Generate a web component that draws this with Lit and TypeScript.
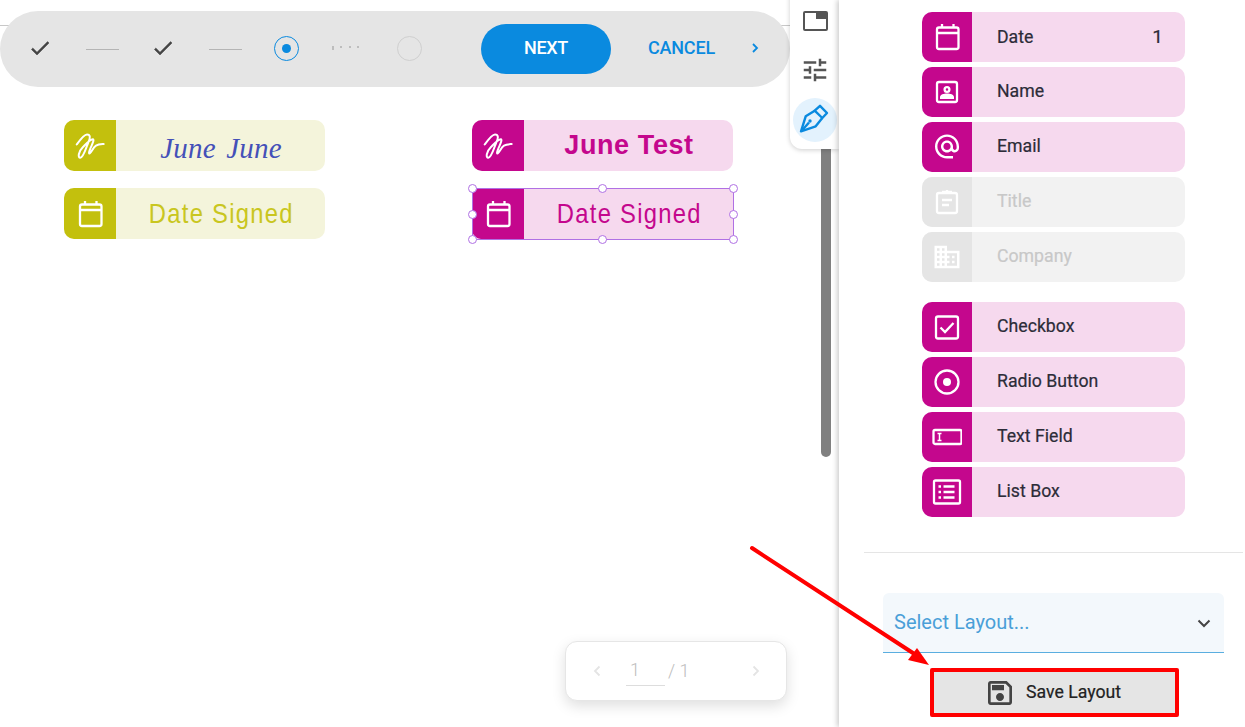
import { LitElement, html, css, svg } from "lit";
import { customElement } from "lit/decorators.js";

const MP = (d: string) => svg`<path fill="currentColor" stroke="none" d=${d}></path>`;
const ICONS: Record<string, unknown> = {
  calendar: svg`<rect x="5" y="5.500" width="21.500" height="21.500" rx="2"></rect><path d="M5 11h21.500M10 2v3.500M21.500 2v3.500"></path>`,
  sign: svg`<path stroke-width="2" stroke-linecap="round" stroke-linejoin="round" d="M1.700 13.500C5 9 9 3.500 12 3.500c3.500 0 3.500 3 1.500 7.500C11.500 15.500 8.500 26.800 5.300 26.800 2.800 26.800 3 21 8 16c2.500-2.500 7-7.800 9.700-7.800 2 0-.5 5-2 8.500-1.500 3.500-2.200 6-1.200 5.800 1.500 0 3.500-6 6.500-7.800 2.500-1.500 5.500-1.500 7.700-1.700"></path>`,
  contact: svg`<rect x="5" y="5" width="20" height="20" rx="2"></rect><circle cx="15" cy="12.500" r="2.400"></circle><path fill="currentColor" stroke="none" d="M8 22v-2c0-2.500 4-3.500 7-3.500s7 1 7 3.500v2z"></path>`,
  at: svg`<g transform="translate(0.600 0) scale(1.2)">${MP("M12 2C6.480 2 2 6.480 2 12s4.480 10 10 10h5v-2h-5c-4.340 0-8-3.660-8-8s3.660-8 8-8 8 3.660 8 8v1.430c0 .79-.71 1.570-1.500 1.570s-1.500-.78-1.500-1.570V12c0-2.760-2.240-5-5-5s-5 2.240-5 5 2.240 5 5 5c1.380 0 2.640-.56 3.540-1.470.65.89 1.770 1.470 2.960 1.470 1.970 0 3.500-1.600 3.500-3.570V12c0-5.520-4.480-10-10-10zm0 13c-1.660 0-3-1.340-3-3s1.340-3 3-3 3 1.340 3 3-1.340 3-3 3z")}</g>`,
  clip: svg`<rect x="5" y="6" width="20" height="20" rx="2"></rect><path d="M10 5h10M15 3v3M10 13h10M10 18h7"></path>`,
  domain: svg`<g transform="scale(1.25)">${MP("M12 7V3H2v18h20V7H12zM6 19H4v-2h2v2zm0-4H4v-2h2v2zm0-4H4V9h2v2zm0-4H4V5h2v2zm4 12H8v-2h2v2zm0-4H8v-2h2v2zm0-4H8V9h2v2zm0-4H8V5h2v2zm10 12h-8v-2h2v-2h-2v-2h2v-2h-2V9h8v10zm-2-8h-2v2h2v-2zm0 4h-2v2h2v-2z")}</g>`,
  checkbox: svg`<rect x="4" y="4.500" width="22" height="22" rx="2"></rect><path d="M8.500 15.500l4.500 4.500 8.500-9"></path>`,
  radio: svg`<circle cx="15" cy="15" r="11.500"></circle><circle cx="15" cy="15" r="4" fill="currentColor" stroke="none"></circle>`,
  textfield: svg`<rect x="1.500" y="8" width="28" height="14" rx="1.500"></rect><path stroke-width="1.500" d="M5.500 11.500h4M5.500 18.500h4M7.500 11.500v7"></path>`,
  listbox: svg`<rect x="2" y="3.500" width="26" height="23" rx="1.500"></rect><path d="M11.500 9.500h11M11.500 15h11M11.500 20.500h11M6.500 9.500h2.500M6.500 15h2.500M6.500 20.500h2.500"></path>`,
};

const icon = (name: string) => html`<svg class="ico" viewBox="0 0 30 30" width="30" height="30">${ICONS[name]}</svg>`;

const CHECK = "M9 16.170L4.830 12l-1.420 1.410L9 19 21 7l-1.410-1.410z";
const TUNE = "M3 17v2h6v-2H3zM3 5v2h10V5H3zm10 16v-2h8v-2h-8v-2h-2v6h2zM7 9v2H3v2h4v2h2V9H7zm14 4v-2H11v2h10zm-6-4h2V7h4V5h-4V3h-2v6z";
const SAVE = "M17 3H5c-1.110 0-2 .9-2 2v14c0 1.100.89 2 2 2h14c1.100 0 2-.9 2-2V7l-4-4zm2 16H5V5h11.170L19 7.830V19zm-7-7c-1.660 0-3 1.340-3 3s1.340 3 3 3 3-1.340 3-3-1.340-3-3-3zM6 6h9v4H6z";

const GROUP_A = [
  { label: "Date", icon: "calendar", count: "1" },
  { label: "Name", icon: "contact" },
  { label: "Email", icon: "at" },
  { label: "Title", icon: "clip", off: true },
  { label: "Company", icon: "domain", off: true },
];
const GROUP_B = [
  { label: "Checkbox", icon: "checkbox" },
  { label: "Radio Button", icon: "radio" },
  { label: "Text Field", icon: "textfield" },
  { label: "List Box", icon: "listbox" },
];

@customElement("app-root")
export class AppRoot extends LitElement {
  static styles = css`
    :host { display: block; width: 1245px; height: 727px; position: relative; overflow: hidden; background: #fff; font-family: Roboto, "Liberation Sans", sans-serif; }
    .page { display: flex; height: 727px; }
    .main { width: 839px; flex: none; position: relative; }
    .topline { position: absolute; left: 0; right: 0; top: 25px; height: 1px; background: #c8c8c8; }
    .toolbar { position: absolute; left: 0; top: 11px; width: 790px; height: 76px; box-sizing: border-box; border-radius: 38px; background: #e5e5e5; display: flex; align-items: center; padding-left: 28px; }
    .step { flex: none; display: block; color: #444; margin-top: -2px; stroke: #444; stroke-width: .5px; }
    .conn { flex: none; width: 33px; height: 1px; background: #b4b4b4; }
    .c1 { margin-left: 34px; } .s2 { margin-left: 32px; } .c2 { margin-left: 34px; }
    .cur { flex: none; margin-left: 32px; margin-top: -2px; width: 25px; height: 25px; box-sizing: border-box; border: 1px solid #0a8adf; border-radius: 50%; display: flex; align-items: center; justify-content: center; }
    .cur i { width: 9px; height: 9px; border-radius: 50%; background: #0a8adf; display: block; }
    .dots { flex: none; margin-left: 33px; margin-top: -2px; width: 27px; display: flex; justify-content: space-between; }
    .dots i { width: 2px; height: 2px; background: #bdbdbd; display: block; }
    .dots i:first-child { height: 4px; }
    .todo { flex: none; margin-left: 38px; margin-top: -2px; width: 25px; height: 25px; box-sizing: border-box; border: 1px solid #cfcfcf; border-radius: 50%; }
    .next { flex: none; margin-left: 59px; width: 130px; height: 50px; box-sizing: border-box; padding-bottom: 3px; border-radius: 25px; background: #0a8adf; color: #fff; font-weight: 500; font-size: 18px; display: flex; align-items: center; justify-content: center; letter-spacing: -.3px; }
    .cancel { flex: none; margin-left: 37px; margin-top: -3px; color: #0a8adf; font-weight: 500; font-size: 18px; letter-spacing: -.2px; }
    .chev { flex: none; margin-left: 35px; color: #0a8adf; display: block; margin-top: -2px; }

    .field { position: absolute; width: 261px; height: 51px; display: flex; border-radius: 10px; overflow: hidden; }
    .field .cell { width: 52px; flex: none; display: flex; align-items: center; justify-content: center; color: #fff; }
    .field .txt { flex: 1; display: flex; align-items: center; justify-content: center; padding-left: 1px; white-space: nowrap; }
    .y { background: #f4f4db; } .y .cell { background: #c3c00d; }
    .m { background: #f6d9ee; } .m .cell { background: #c4078d; }
    .sig { font-family: "Liberation Serif", serif; font-style: italic; font-size: 29px; letter-spacing: .2px; word-spacing: 3px; color: #4450b8; padding-top: 6px; }
    .ds { display: inline-block; font-family: "Liberation Sans", sans-serif; font-size: 28px; letter-spacing: 1.500px; transform: scaleX(.85); }
    .y .ds { color: #c9c620; } .m .ds { color: #c4078d; }
    .bold { font-family: "Liberation Sans", sans-serif; font-weight: 700; font-size: 27px; letter-spacing: .6px; color: #c4078d; }
    .sel { position: absolute; left: 472px; top: 188px; width: 262px; height: 52px; box-sizing: border-box; border: 1px solid #b070e4; border-radius: 1px; pointer-events: none; }
    .h { position: absolute; width: 9px; height: 9px; box-sizing: border-box; background: #fff; border: 1px solid #b070e4; border-radius: 50%; }
    .ico { display: block; fill: none; stroke: currentColor; stroke-width: 2.300; }

    .scroll { position: absolute; left: 821px; top: 140px; width: 10px; height: 317px; background: #808080; border-radius: 0 0 5px 5px; }
    .palette { position: absolute; left: 790px; top: -10px; width: 49px; height: 159px; box-sizing: border-box; padding-top: 21px; background: #fff; border-radius: 0 0 0 12px; box-shadow: 0 1px 5px rgba(0,0,0,.2); display: flex; flex-direction: column; align-items: center; color: #555; }
    .pip { width: 25px; height: 20px; margin-left: 1px; box-sizing: border-box; border: 2px solid #555; border-radius: 2px; position: relative; flex: none; }
    .pip i { position: absolute; right: 0; top: 0; width: 10px; height: 6px; background: #555; display: block; }
    .tune { margin-top: 24px; flex: none; display: block; margin-left: 1px; }
    .pen { margin-top: 13px; margin-left: 1px; width: 44px; height: 44px; border-radius: 50%; background: #e3f2fd; display: flex; align-items: center; justify-content: center; color: #0a8adf; flex: none; }
    .pen svg { display: block; overflow: visible; }

    .pager { position: absolute; left: 565px; top: 641px; width: 222px; height: 60px; box-sizing: border-box; background: #fff; border: 1px solid #e6e6e6; border-radius: 12px; box-shadow: 0 5px 14px rgba(0,0,0,.13); display: flex; align-items: center; padding-left: 26px; color: #bdbdbd; font-size: 18px; }
    .pager svg { flex: none; display: block; color: #e4e4e4; }
    .num { flex: none; margin-left: 24px; width: 39px; height: 28px; box-sizing: border-box; border-bottom: 1px solid #ddd; padding-left: 4px; line-height: 24px; margin-top: 2px; font-weight: 300; }
    .tot { flex: none; margin-left: 3px; margin-top: -2px; width: 83px; font-weight: 300; }

    .side { flex: 1; position: relative; z-index: 1; background: #fff; box-shadow: -2px 0 5px rgba(0,0,0,.2); display: flex; flex-direction: column; align-items: flex-start; padding-top: 12px; }
    .group { margin-left: 83px; width: 263px; display: flex; flex-direction: column; gap: 5px; }
    .g2 { margin-top: 20px; }
    .row { height: 50px; display: flex; border-radius: 10px; overflow: hidden; background: #f6d9ee; color: #2c2c38; font-size: 17.700px; -webkit-text-stroke: .2px currentColor; }
    .row .cell { width: 50px; flex: none; background: #c4078d; color: #fff; display: flex; align-items: center; justify-content: center; }
    .row .lb { flex: 1; padding-left: 25px; line-height: 48px; }
    .row.hasct .lb { line-height: 50px; }
    .row .ct { padding-right: 22px; line-height: 50px; font-size: 19px; }
    .row.off { background: #f2f2f2; color: #c8c8c8; }
    .row.off .cell { background: #e5e5e5; }
    .div { margin-top: 35px; margin-left: 25px; width: 379px; height: 1px; background: #e5e5e5; }
    .select { margin-top: 40px; margin-left: 44px; width: 341px; height: 60px; box-sizing: border-box; background: #f3f8fc; border-bottom: 1px solid #5aaee0; border-radius: 6px 6px 0 0; display: flex; align-items: center; justify-content: space-between; padding: 0 12px 2px 11px; color: #4a9fd8; font-size: 20px; }
    .select svg { color: #444; display: block; margin-top: 2px; }
    .save { margin-top: 15px; margin-left: 91px; width: 249px; height: 49px; box-sizing: border-box; border: 4px solid #f00; border-radius: 2px; background: #e5e5e5; display: flex; align-items: center; color: #222; font-size: 17.700px; -webkit-text-stroke: .2px currentColor; padding-left: 50px; gap: 10px; }
    .save span { padding-bottom: 2px; }
    .save svg { color: #444; display: block; flex: none; }

    .arrow { position: absolute; left: 0; top: 0; z-index: 2; pointer-events: none; }
  `;

  private field(cls: string, style: string, ic: string, txtCls: string, text: string) {
    return html`<div class="field ${cls}" style=${style}><div class="cell">${icon(ic)}</div><div class="txt"><span class=${txtCls}>${text}</span></div></div>`;
  }

  private rows(items: { label: string; icon: string; count?: string; off?: boolean }[], cls = "") {
    return html`<div class="group ${cls}">${items.map(
      (r) => html`<div class="row ${r.off ? "off" : ""} ${r.count ? "hasct" : ""}"><div class="cell">${icon(r.icon)}</div><div class="lb">${r.label}</div>${r.count ? html`<div class="ct">${r.count}</div>` : ""}</div>`
    )}</div>`;
  }

  render() {
    const handles = [[-5,-5],[125,-5],[256,-5],[-5,21],[256,21],[-5,46],[125,46],[256,46]];
    return html`
      <div class="page">
        <div class="main">
          <div class="topline"></div>
          <div class="toolbar">
            <svg class="step" width="24" height="24" viewBox="0 0 24 24"><path fill="currentColor" d=${CHECK}></path></svg>
            <div class="conn c1"></div>
            <svg class="step s2" width="24" height="24" viewBox="0 0 24 24"><path fill="currentColor" d=${CHECK}></path></svg>
            <div class="conn c2"></div>
            <div class="cur"><i></i></div>
            <div class="dots"><i></i><i></i><i></i><i></i></div>
            <div class="todo"></div>
            <div class="next">NEXT</div>
            <div class="cancel">CANCEL</div>
            <svg class="chev" width="10" height="12" viewBox="0 0 10 12"><path fill="none" stroke="currentColor" stroke-width="1.800" d="M3 2l4 4-4 4"></path></svg>
          </div>

          ${this.field("y", "left:64px;top:120px", "sign", "sig", "June June")}
          ${this.field("y", "left:64px;top:188px", "calendar", "ds", "Date Signed")}
          ${this.field("m", "left:472px;top:120px", "sign", "bold", "June Test")}
          ${this.field("m", "left:472px;top:188px;border-radius:9px 0 0 9px", "calendar", "ds", "Date Signed")}
          <div class="sel">${handles.map(([x, y]) => html`<span class="h" style="left:${x}px;top:${y}px"></span>`)}</div>

          <div class="scroll"></div>
          <div class="palette">
            <div class="pip"><i></i></div>
            <svg class="tune" width="30" height="30" viewBox="0 0 24 24"><path fill="currentColor" d=${TUNE}></path></svg>
            <div class="pen">
              <svg width="30" height="30" viewBox="0 0 30 30" fill="none" stroke="currentColor" stroke-width="2.400" stroke-linejoin="round">
                <path d="M14.700 5.700L20 .8l7 7.200-4.700 5z"></path>
                <path d="M14.700 5.700L5.700 11.300 1 26.300l14.700-5 6.600-8.300"></path>
                <path d="M1.500 26l7.500-8.500"></path>
                <circle cx="10" cy="16" r="1.700" fill="currentColor" stroke="none"></circle>
              </svg>
            </div>
          </div>

          <div class="pager">
            <svg width="10" height="14" viewBox="0 0 10 14"><path fill="none" stroke="currentColor" stroke-width="1.800" d="M7.500 2.500L3 7l4.500 4.500"></path></svg>
            <div class="num">1</div>
            <div class="tot">/ 1</div>
            <svg width="10" height="14" viewBox="0 0 10 14"><path fill="none" stroke="currentColor" stroke-width="1.800" d="M2.500 2.500L7 7l-4.500 4.500"></path></svg>
          </div>
        </div>

        <div class="side">
          ${this.rows(GROUP_A)}
          ${this.rows(GROUP_B, "g2")}
          <div class="div"></div>
          <div class="select">
            <span>Select Layout...</span>
            <svg width="16" height="16" viewBox="0 0 16 16"><path fill="none" stroke="currentColor" stroke-width="2" d="M2.500 5.500L8 11l5.500-5.500"></path></svg>
          </div>
          <div class="save">
            <svg width="32" height="32" viewBox="0 0 24 24"><path fill="currentColor" d=${SAVE}></path></svg>
            <span>Save Layout</span>
          </div>
        </div>
      </div>
      <svg class="arrow" width="1245" height="727" viewBox="0 0 1245 727">
        <path d="M752 548L916 655" stroke="#f00" stroke-width="4" stroke-linecap="round" fill="none"></path>
        <path d="M929 665L908 660 917 648z" fill="#f00"></path>
      </svg>
    `;
  }
}
